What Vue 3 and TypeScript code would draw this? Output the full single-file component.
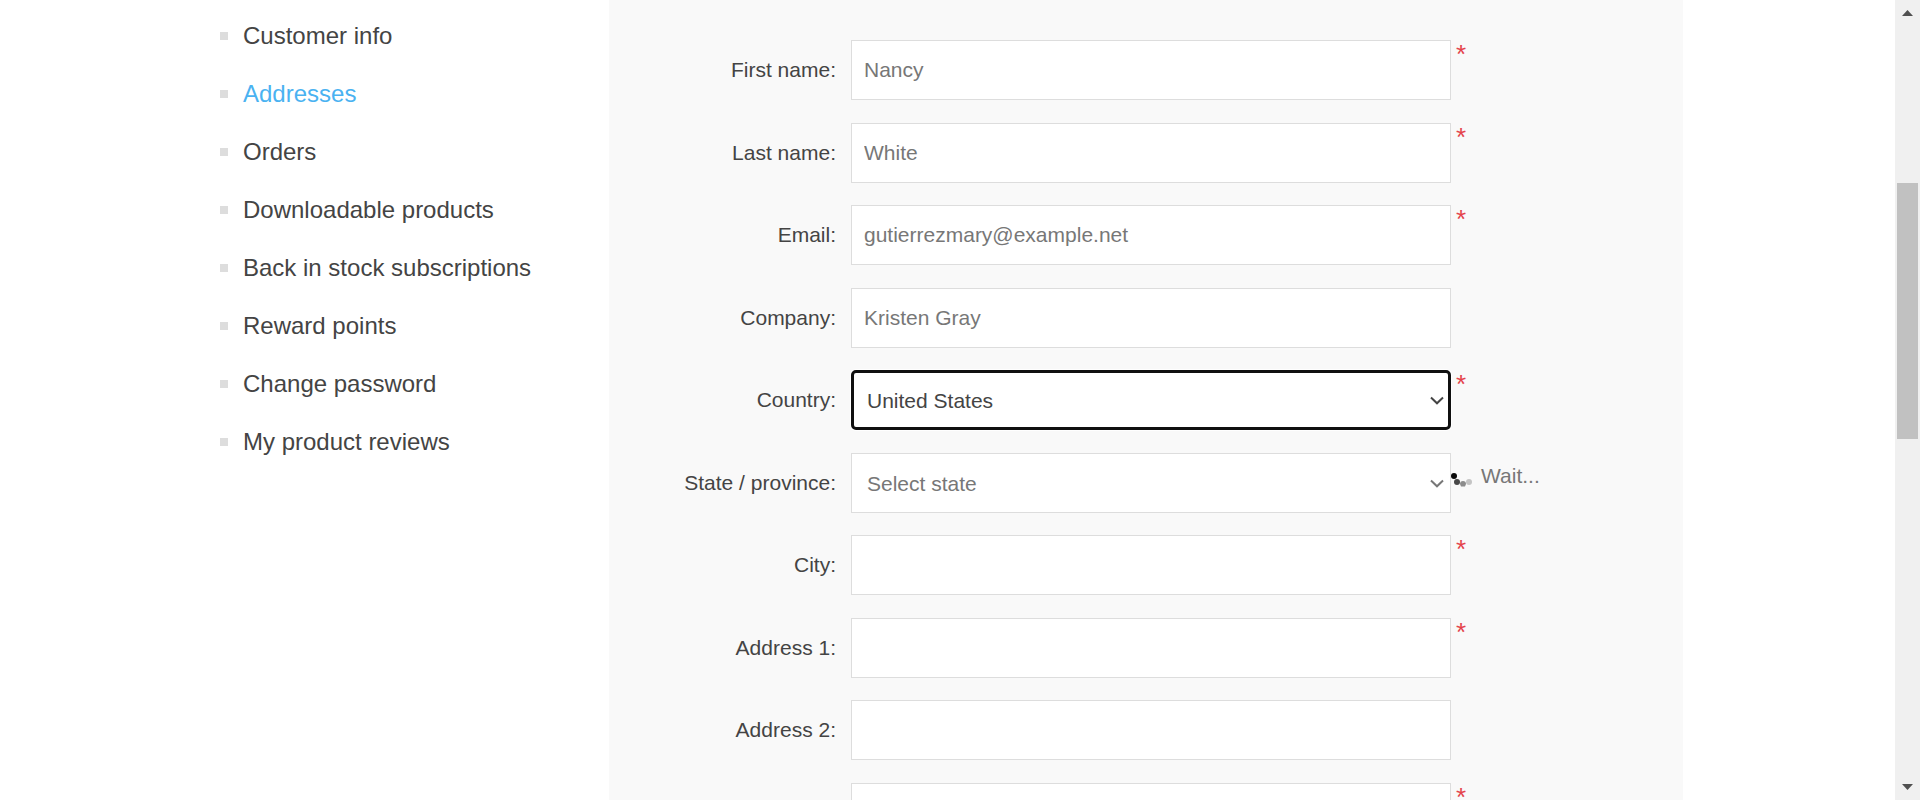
<script setup lang="ts">
import { ref } from 'vue'

interface Field {
  id: string
  label?: string
  name?: string
  placeholder?: string
  required?: boolean
  type?: string
  options?: string[]
  focused?: boolean
  loading?: boolean
}

const links = [
  'Customer info',
  'Addresses',
  'Orders',
  'Downloadable products',
  'Back in stock subscriptions',
  'Reward points',
  'Change password',
  'My product reviews',
]
const active = ref('Addresses')

const fields: Field[] = [
  { id: 'first-name', label: 'First name:', placeholder: 'Nancy', required: true },
  { id: 'last-name', label: 'Last name:', placeholder: 'White', required: true },
  { id: 'email', label: 'Email:', placeholder: 'gutierrezmary@example.net', required: true, type: 'email' },
  { id: 'company', label: 'Company:', placeholder: 'Kristen Gray' },
  { id: 'country', label: 'Country:', options: ['United States'], required: true, focused: true },
  { id: 'state', label: 'State / province:', options: ['Select state'], loading: true },
  { id: 'city', label: 'City:', required: true },
  { id: 'address-1', label: 'Address 1:', required: true },
  { id: 'address-2', label: 'Address 2:' },
  { id: 'postal-code', name: 'Postal code', required: true },
]
</script>

<template>
  <div class="window">
    <div class="viewport">
      <div class="container">
        <nav class="sidebar" aria-label="My account">
          <ul class="links">
            <li v-for="link in links" :key="link">
              <a href="#" :class="{ active: link === active }" @click.prevent="active = link">{{ link }}</a>
            </li>
          </ul>
        </nav>
        <main class="content">
          <form class="fields" @submit.prevent>
            <div v-for="field in fields" :key="field.id" class="row">
              <label :for="field.id" :aria-label="field.name">{{ field.label }}</label>
              <div v-if="field.options" class="select-box">
                <select :id="field.id" class="control" :class="{ focused: field.focused, pending: field.loading }">
                  <option v-for="option in field.options" :key="option">{{ option }}</option>
                </select>
                <svg class="chevron" :class="{ pending: field.loading }" viewBox="0 0 14 9" aria-hidden="true">
                  <path d="M1 1.5 L7 7.3 L13 1.5" />
                </svg>
              </div>
              <input
                v-else
                :id="field.id"
                class="control"
                :type="field.type ?? 'text'"
                :placeholder="field.placeholder"
                :aria-label="field.name"
              />
              <span v-if="field.required" class="required">*</span>
              <span v-if="field.loading" class="wait" role="status">
                <svg class="spinner" viewBox="0 0 24 24" aria-hidden="true">
                  <circle cx="3" cy="12" r="3" fill="#080808" />
                  <circle cx="6" cy="18" r="3" fill="#484848" />
                  <path d="M9 20 A3 3 0 0 1 15 20 L14 22.5 H10 Z" fill="#8c8c8c" />
                  <circle cx="18" cy="18" r="3" fill="#c4c4c4" />
                </svg>
                Wait...
              </span>
            </div>
          </form>
        </main>
      </div>
    </div>
    <div class="scrollbar" aria-hidden="true">
      <svg class="arrow" viewBox="0 0 25 25"><path d="M7 16 L12.5 10 L18 16 Z" /></svg>
      <div class="before"></div>
      <div class="thumb"></div>
      <div class="after"></div>
      <svg class="arrow" viewBox="0 0 25 25"><path d="M7 9 L12.5 15 L18 9 Z" /></svg>
    </div>
  </div>
</template>

<style>
body {
  margin: 0;
  background: #fff;
}
</style>

<style scoped>
* {
  box-sizing: border-box;
}

.window {
  display: flex;
  height: 100vh;
  overflow: hidden;
  font-family: "Liberation Sans", Arial, sans-serif;
  font-size: 21px;
  color: #444;
}

.viewport {
  flex: 1;
  min-width: 0;
  overflow: hidden;
}

.container {
  display: flex;
  align-items: stretch;
  max-width: 1471px;
  min-height: 100%;
  margin: 0 auto;
}

.sidebar {
  flex: 1;
}

.links {
  margin: 0;
  padding: 7px 8px;
  list-style: none;
}

.links li {
  display: flex;
  align-items: center;
  gap: 15px;
  height: 58px;
  font-size: 24px;
}

.links li::before {
  content: "";
  width: 8px;
  height: 8px;
  background: #ddd;
}

.links a {
  color: #444;
  text-decoration: none;
}

.links a.active {
  color: #4ab2f1;
}

.content {
  flex: 0 1 1074px;
  padding-top: 40px;
  background: #f9f9f9;
}

.row {
  display: grid;
  grid-template-columns: 227px minmax(0, 600px) 1fr;
  column-gap: 15px;
  height: 60px;
  margin-bottom: 22px;
}

.row:nth-child(odd) {
  margin-bottom: 23px;
}

.row label {
  align-self: center;
  text-align: right;
}

.select-box {
  position: relative;
}

.control {
  display: block;
  width: 100%;
  height: 60px;
  padding: 0 12px;
  border: 1px solid #ddd;
  border-radius: 0;
  background: #fff;
  font: inherit;
  color: #444;
  outline: none;
  appearance: none;
}

.control::placeholder {
  color: #777;
  opacity: 1;
}

select.control {
  padding: 0 15px;
}

.control.pending {
  color: #777;
}

.control.focused {
  border: 3px solid #101010;
  border-radius: 5px;
  padding: 0 13px;
  box-shadow: 0 0 0 1px #fff;
}

.chevron {
  position: absolute;
  top: 26px;
  right: 7px;
  width: 14px;
  height: 9px;
  fill: none;
  stroke: #444;
  stroke-width: 2;
  pointer-events: none;
}

.chevron.pending {
  stroke: #777;
}

.required {
  margin-left: -10px;
  font-size: 26px;
  line-height: 28px;
  color: #e4434b;
}

.wait {
  display: flex;
  align-items: center;
  gap: 6px;
  height: 46px;
  margin-left: -15px;
  color: #777;
}

.spinner {
  width: 24px;
  height: 24px;
}

.scrollbar {
  display: flex;
  flex-direction: column;
  width: 25px;
  background: #f0f0f0;
}

.arrow {
  width: 25px;
  height: 25px;
  fill: #505050;
}

.before {
  flex: 158;
}

.thumb {
  flex: 256;
  margin: 0 2px;
  background: #c1c1c1;
}

.after {
  flex: 336;
}
</style>
